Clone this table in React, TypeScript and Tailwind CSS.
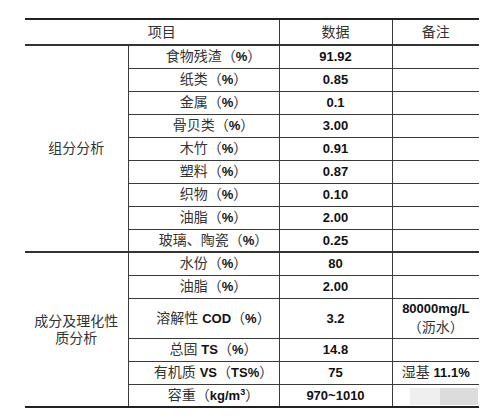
import React from "react";

const B = ({ children }: { children: React.ReactNode }) => (
  <span className="font-bold text-[13px] text-[#111] [font-family:'Liberation_Sans',Arial,sans-serif]">{children}</span>
);

const P = () => (
  <>
    （<B>%</B>）
  </>
);

type Row = { item: React.ReactNode; data: string; remark?: React.ReactNode; h?: string };

const rows1: Row[] = [
  { item: <>食物残渣<P /></>, data: "91.92" },
  { item: <>纸类<P /></>, data: "0.85" },
  { item: <>金属<P /></>, data: "0.1" },
  { item: <>骨贝类<P /></>, data: "3.00" },
  { item: <>木竹<P /></>, data: "0.91" },
  { item: <>塑料<P /></>, data: "0.87" },
  { item: <>织物<P /></>, data: "0.10" },
  { item: <>油脂<P /></>, data: "2.00" },
  { item: <>玻璃、陶瓷<P /></>, data: "0.25" },
];

const rows2: Row[] = [
  { item: <>水份<P /></>, data: "80" },
  { item: <>油脂<P /></>, data: "2.00" },
  {
    item: <>溶解性 <B>COD</B><P /></>,
    data: "3.2",
    remark: (
      <div className="leading-[19px]">
        <div><B>80000mg/L</B></div>
        <div>（沥水）</div>
      </div>
    ),
    h: "h-[40px]",
  },
  { item: <>总固 <B>TS</B><P /></>, data: "14.8" },
  { item: <>有机质 <B>VS</B>（<B>TS%</B>）</>, data: "75", remark: <>湿基 <B>11.1%</B></> },
  {
    item: (
      <>
        容重（<B>kg/m<span className="relative -top-[5px] text-[9px] leading-none">3</span></B>）
      </>
    ),
    data: "970~1010",
  },
];

export default function App() {
  const cjk = "[font-family:'Liberation_Sans','Noto_Sans_CJK_SC',sans-serif]";
  const renderRows = (rows: Row[], group: React.ReactNode, last: boolean) =>
    rows.map((r, i) => (
      <tr
        key={i}
        className={`${r.h ?? "h-[23px]"} ${i === 0 ? "border-t-[2px] border-t-[#333]" : "border-t border-t-[#3a3a3a]"} ${
          last && i === rows.length - 1 ? "border-b-[2px] border-b-[#222]" : ""
        }`}
      >
        {i === 0 && (
          <td rowSpan={rows.length} className="text-center align-middle p-0 leading-[17px] text-[14px]">
            {group}
          </td>
        )}
        <td className="border-l border-r border-[#3a3a3a] text-center pl-[20px] p-0 text-[14px] leading-[16px]">
          {r.item}
        </td>
        <td className="border-r border-[#3a3a3a] text-center p-0 leading-[16px]">
          <B>{r.data}</B>
        </td>
        <td className="text-center p-0 text-[14px] leading-[16px]">{r.remark}</td>
      </tr>
    ));

  return (
    <div className={`w-[503px] h-[419px] bg-white relative overflow-hidden ${cjk} text-[#333]`}>
      <div className="pt-[18px] pl-[25px]">
        <table className="border-collapse table-fixed w-[454px] leading-[16px]">
          <colgroup>
            <col className="w-[103px]" />
            <col className="w-[151px]" />
            <col className="w-[113px]" />
            <col className="w-[87px]" />
          </colgroup>
          <thead>
            <tr className="h-[26px] border-t-[2px] border-t-[#222]">
              <th colSpan={2} className="font-normal text-[14px] text-center pl-[20px] p-0 border-r border-[#3a3a3a]">
                项目
              </th>
              <th className="font-normal text-[14px] text-center p-0 border-r border-[#3a3a3a]">数据</th>
              <th className="font-normal text-[14px] text-center p-0">备注</th>
            </tr>
          </thead>
          <tbody>
            {renderRows(rows1, <>组分分析</>, false)}
            {renderRows(
              rows2,
              <>
                <div>成分及理化性</div>
                <div>质分析</div>
              </>,
              true
            )}
          </tbody>
        </table>
      </div>
      <div className="absolute left-[410px] top-[388px] w-[30px] h-[17px] bg-[#efefef]" />
      <div className="absolute left-[440px] top-[388px] w-[38px] h-[17px] bg-[#dcdcdc]" />
    </div>
  );
}
